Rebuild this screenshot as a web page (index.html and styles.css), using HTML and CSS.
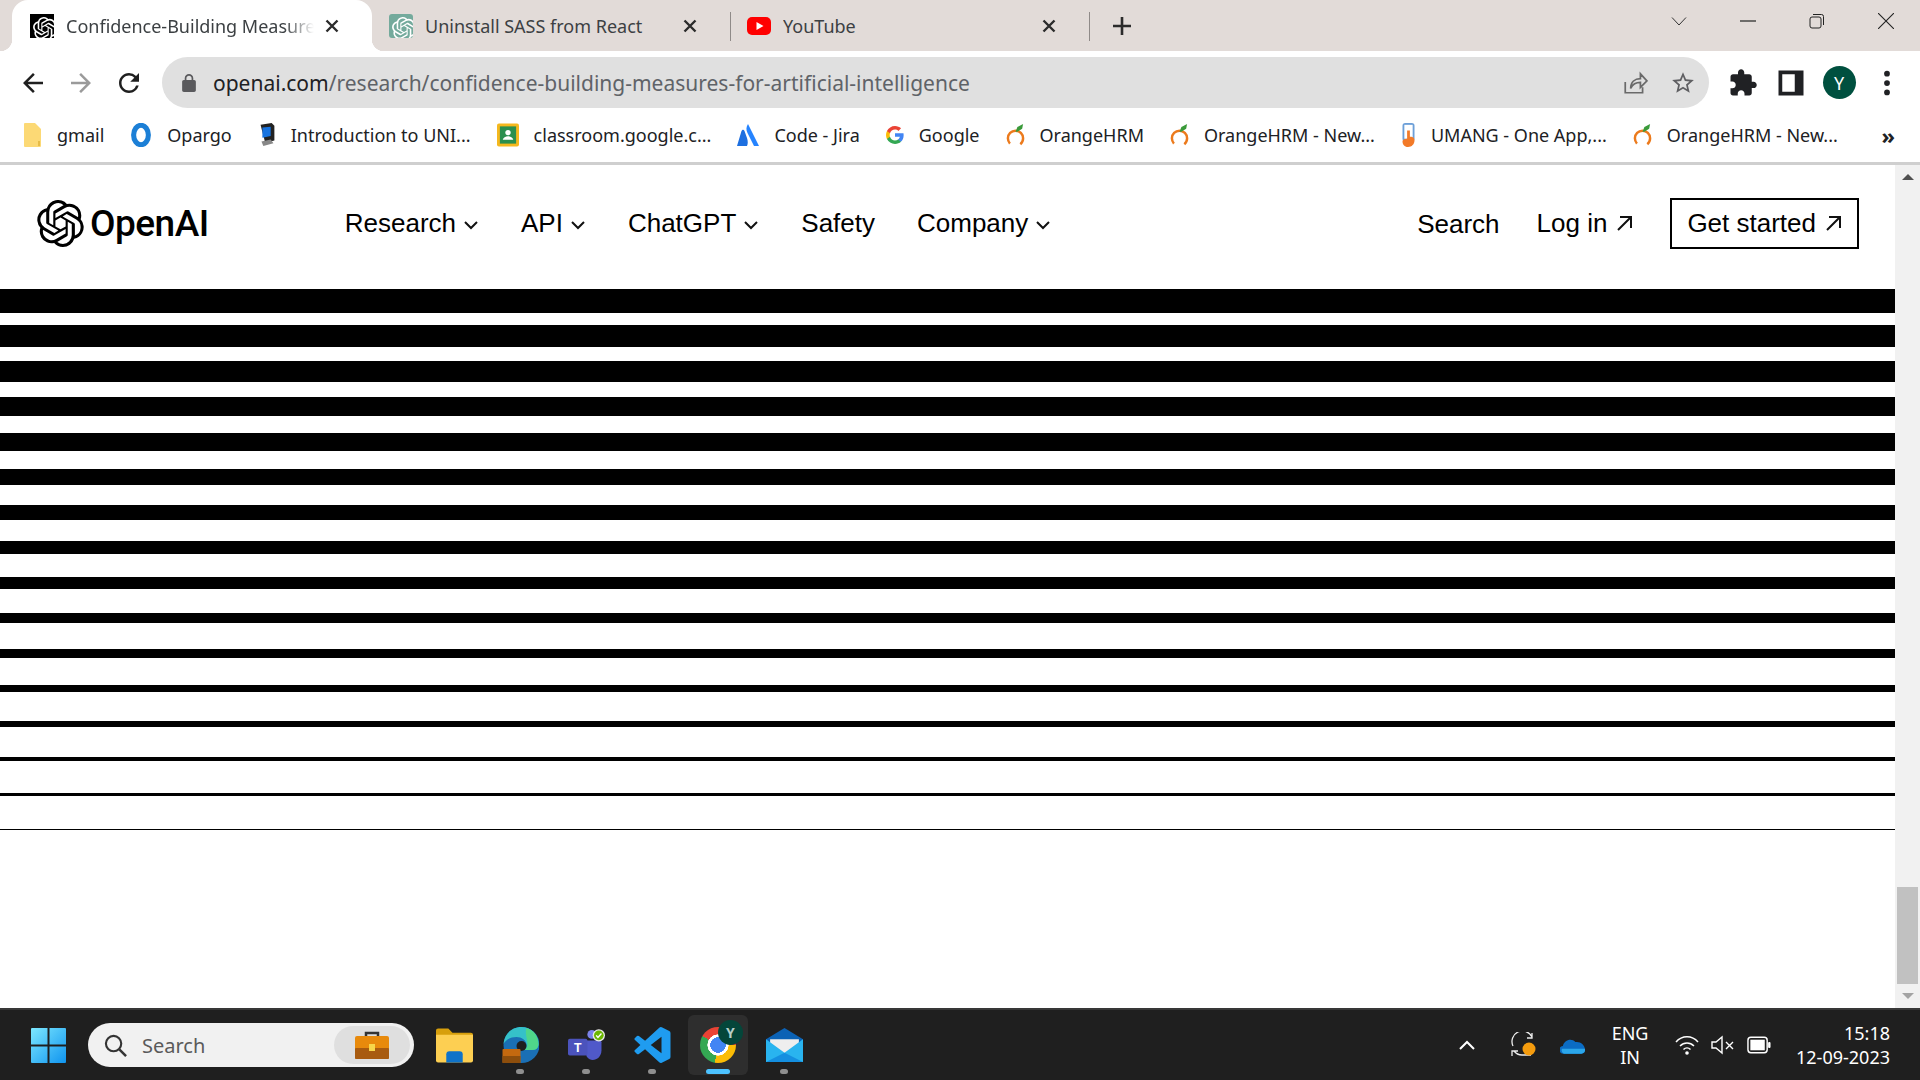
FILE: index.html
```html
<!DOCTYPE html>
<html lang="en">
<head>
    <meta charset="UTF-8">
    <meta name="viewport" content="width=device-width, initial-scale=1.0">
    <title>OpenAI - Chrome</title>
    <link rel="stylesheet" href="styles.css">
</head>
<body>
    <svg class="defs" xmlns="http://www.w3.org/2000/svg">
        <symbol id="openai" viewBox="0 0 24 24"><path d="M22.2819 9.8211a5.9847 5.9847 0 0 0-.5157-4.9108 6.0462 6.0462 0 0 0-6.5098-2.9A6.0651 6.0651 0 0 0 4.9807 4.1818a5.9847 5.9847 0 0 0-3.9977 2.9 6.0462 6.0462 0 0 0 .7427 7.0966 5.98 5.98 0 0 0 .511 4.9107 6.051 6.051 0 0 0 6.5146 2.9001A5.9847 5.9847 0 0 0 13.2599 24a6.0557 6.0557 0 0 0 5.7718-4.2058 5.9894 5.9894 0 0 0 3.9977-2.9001 6.0557 6.0557 0 0 0-.7475-7.0729zm-9.022 12.6081a4.4755 4.4755 0 0 1-2.8764-1.0408l.1419-.0804 4.7783-2.7582a.7948.7948 0 0 0 .3927-.6813v-6.7369l2.02 1.1686a.071.071 0 0 1 .038.052v5.5826a4.504 4.504 0 0 1-4.4945 4.4944zm-9.6607-4.1254a4.4708 4.4708 0 0 1-.5346-3.0137l.142.0852 4.783 2.7582a.7712.7712 0 0 0 .7806 0l5.8428-3.3685v2.3324a.0804.0804 0 0 1-.0332.0615L9.74 19.9502a4.4992 4.4992 0 0 1-6.1408-1.6464zM2.3408 7.8956a4.485 4.485 0 0 1 2.3655-1.9728V11.6a.7664.7664 0 0 0 .3879.6765l5.8144 3.3543-2.0201 1.1685a.0757.0757 0 0 1-.071 0l-4.8303-2.7865A4.504 4.504 0 0 1 2.3408 7.872zm16.5963 3.8558L13.1038 8.364 15.1192 7.2a.0757.0757 0 0 1 .071 0l4.8303 2.7913a4.4944 4.4944 0 0 1-.6765 8.1042v-5.6772a.79.79 0 0 0-.407-.667zm2.0107-3.0231l-.142-.0852-4.7735-2.7818a.7759.7759 0 0 0-.7854 0L9.409 9.2297V6.8974a.0662.0662 0 0 1 .0284-.0615l4.8303-2.7866a4.4992 4.4992 0 0 1 6.6802 4.66zM8.3065 12.863l-2.02-1.1638a.0804.0804 0 0 1-.038-.0567V6.0742a4.4992 4.4992 0 0 1 7.3757-3.4537l-.142.0805L8.704 5.459a.7948.7948 0 0 0-.3927.6813zm1.0976-2.3654l2.602-1.4998 2.6069 1.4998v2.9994l-2.5974 1.4997-2.6067-1.4997Z"/></symbol>
        <symbol id="x" viewBox="0 0 16 16"><path d="M2.5 2.5l11 11M13.5 2.5l-11 11" fill="none" stroke="#2b2b2b" stroke-width="2.4"/></symbol>
        <symbol id="chev" viewBox="0 0 16 16"><path d="M2 5l6 6 6-6" fill="none" stroke="#111" stroke-width="2"/></symbol>
        <symbol id="arrow" viewBox="0 0 18 18"><path d="M3 16L15.5 3.5M5 3h11v11" fill="none" stroke="#111" stroke-width="2"/></symbol>
        <symbol id="orange" viewBox="0 0 20 26"><circle cx="10" cy="16" r="8" fill="none" stroke="#ec7a1c" stroke-width="2.6" stroke-dasharray="38 12" stroke-dashoffset="-19"/><path d="M10 9l2-5 6-3-1 5-5 3z" fill="#3a9a3a"/></symbol>
    </svg>

    <div class="window">
        <div class="tabstrip">
            <div class="tab tab-active">
                <svg class="favicon fav-black" viewBox="-4 -4 32 32"><use href="#openai"/></svg>
                <span class="tab-title tab-fade">Confidence-Building Measures for Artificial Intelligence</span>
                <svg class="tab-close"><use href="#x"/></svg>
            </div>
            <div class="tab">
                <svg class="favicon fav-teal" viewBox="-4 -4 32 32"><use href="#openai"/></svg>
                <span class="tab-title">Uninstall SASS from React</span>
                <svg class="tab-close"><use href="#x"/></svg>
            </div>
            <div class="tab-sep"></div>
            <div class="tab">
                <svg class="favicon" viewBox="0 0 24 24"><rect y="3" width="24" height="18" rx="5" fill="#f00"/><path d="M9.5 8l7 4-7 4z" fill="#fff"/></svg>
                <span class="tab-title">YouTube</span>
                <svg class="tab-close"><use href="#x"/></svg>
            </div>
            <div class="tab-sep"></div>
            <svg class="new-tab" viewBox="0 0 18 18"><path d="M9 0v18M0 9h18" stroke="#2b2b2b" stroke-width="2.6"/></svg>
            <div class="win-controls">
                <div class="win-btn"><svg viewBox="0 0 16 16"><path d="M1 4.5l7 7.5 7-7.5" fill="none" stroke="#333" stroke-width="1"/></svg></div>
                <div class="win-btn"><svg viewBox="0 0 16 16"><path d="M0 8h16" stroke="#222" stroke-width="1.2"/></svg></div>
                <div class="win-btn"><svg viewBox="0 0 16 16"><rect x="1" y="4" width="11" height="11" rx="2" fill="none" stroke="#222"/><path d="M4 1.5h8.5a2 2 0 0 1 2 2V12" fill="none" stroke="#222"/></svg></div>
                <div class="win-btn"><svg viewBox="0 0 16 16"><path d="M0 0l16 16M16 0L0 16" stroke="#222" stroke-width="1.1"/></svg></div>
            </div>
        </div>

        <div class="toolbar">
            <div class="tool-btn"><svg viewBox="0 0 24 24"><path fill="#1f1f1f" d="M20 11H7.83l5.59-5.59L12 4l-8 8 8 8 1.41-1.41L7.83 13H20v-2z"/></svg></div>
            <div class="tool-btn"><svg viewBox="0 0 24 24"><path fill="#9a9a9a" d="M12 4l-1.41 1.41L16.17 11H4v2h12.17l-5.58 5.59L12 20l8-8z"/></svg></div>
            <div class="tool-btn"><svg viewBox="0 0 24 24"><path fill="#1f1f1f" d="M17.65 6.35A7.958 7.958 0 0012 4c-4.42 0-7.99 3.58-7.99 8s3.57 8 7.99 8c3.73 0 6.84-2.55 7.73-6h-2.08A5.99 5.99 0 0112 18c-3.31 0-6-2.69-6-6s2.69-6 6-6c1.66 0 3.14.69 4.22 1.78L13 11h7V4l-2.35 2.35z"/></svg></div>
            <div class="omnibox">
                <svg class="lock" viewBox="4 1 16 21"><path fill="#5a5a5d" d="M18 8h-1V6c0-2.76-2.24-5-5-5S7 3.24 7 6v2H6c-1.1 0-2 .9-2 2v10c0 1.1.9 2 2 2h12c1.1 0 2-.9 2-2V10c0-1.1-.9-2-2-2zM9 6c0-1.66 1.34-3 3-3s3 1.34 3 3v2H9V6z"/></svg>
                <span class="url"><span class="url-host">openai.com</span>/research/confidence-building-measures-for-artificial-intelligence</span>
                <div class="omni-btn"><svg viewBox="0 0 24 24"><path d="M3 11v10h16v-5M8 17c0-6 4-9 9-9V3.500l6 6.500-6 6v-4.500c-4 0-7 1.500-9 5.500z" fill="none" stroke="#6a6a6a" stroke-width="1.6"/></svg></div>
                <div class="omni-btn"><svg viewBox="0 0 24 24"><path fill="#5f5f62" d="M22 9.24l-7.19-.62L12 2 9.19 8.630 2 9.240l5.460 4.730L5.820 21 12 17.270 18.180 21l-1.630-7.030L22 9.240zM12 15.400l-3.760 2.270 1-4.280-3.320-2.880 4.380-.38L12 6.100l1.710 4.040 4.380.38-3.320 2.880 1 4.280L12 15.400z"/></svg></div>
            </div>
            <div class="tool-actions">
                <div class="tool-btn"><svg viewBox="0 0 24 24"><path fill="#202124" d="M20.500 11H19V7c0-1.100-.9-2-2-2h-4V3.500C13 2.120 11.880 1 10.500 1S8 2.120 8 3.500V5H4c-1.100 0-1.990.9-1.990 2v3.800H3.500c1.490 0 2.700 1.210 2.700 2.700s-1.210 2.700-2.700 2.700H2V20c0 1.100.9 2 2 2h3.800v-1.500c0-1.490 1.210-2.700 2.700-2.700 1.490 0 2.700 1.210 2.700 2.700V22H17c1.100 0 2-.9 2-2v-4h1.500c1.380 0 2.500-1.120 2.500-2.500S21.880 11 20.500 11z"/></svg></div>
                <div class="tool-btn"><svg viewBox="0 0 24 24"><path fill="#202124" fill-rule="evenodd" d="M2 2h20v20H2zM5 5v14h10V5z"/></svg></div>
                <div class="tool-btn"><span class="avatar">Y</span></div>
                <div class="tool-btn"><svg viewBox="0 0 24 24"><circle cx="12" cy="4.500" r="2.300" fill="#202124"/><circle cx="12" cy="12" r="2.300" fill="#202124"/><circle cx="12" cy="19.500" r="2.300" fill="#202124"/></svg></div>
            </div>
        </div>

        <div class="bookmarks">
            <div class="bm"><svg class="bm-icon" viewBox="0 0 18 24"><path d="M1 0h10l6 6v17a1 1 0 0 1-1 1H1a1 1 0 0 1-1-1V1a1 1 0 0 1 1-1z" fill="#fcd975"/><path d="M15 18v5" stroke="#e0b23a" stroke-width="1.500"/></svg><span>gmail</span></div>
            <div class="bm"><svg class="bm-icon bm-wide" viewBox="0 0 22 26"><ellipse cx="11" cy="13" rx="8" ry="10.500" fill="none" stroke="#1c7fd6" stroke-width="5.500"/></svg><span>Opargo</span></div>
            <div class="bm"><svg class="bm-icon" viewBox="0 0 18 26"><path d="M2 2l12-2 3 3v16l-10 2z" fill="#222"/><path d="M4 5l9-1v10l-9 2z" fill="#1673e0"/><path d="M3 20l10-2 3 4-11 3z" fill="#888"/></svg><span>Introduction to UNI...</span></div>
            <div class="bm"><svg class="bm-icon bm-wide" viewBox="0 0 23 24"><rect width="23" height="24" rx="2" fill="#f5b81e"/><rect x="3" y="3" width="17" height="18" fill="#2a8f4e"/><circle cx="11.500" cy="9.500" r="2.800" fill="#fff"/><path d="M6 17c1-5 10-5 11 0z" fill="#fff"/></svg><span>classroom.google.c...</span></div>
            <div class="bm"><svg class="bm-icon bm-wide" viewBox="0 0 22 24"><path d="M11 1c-2 3-2 6-.5 9l6.500 13h5z" fill="#2684ff"/><path d="M7.500 8c-1.500-2-2-1-3 0L0 23h10c1-2 1-5 0-8z" fill="#1d6fe0"/></svg><span>Code - Jira</span></div>
            <div class="bm"><svg class="bm-icon" viewBox="1 1 22 22"><path fill="#4285F4" d="M22.560 12.250c0-.78-.07-1.530-.2-2.250H12v4.260h5.920c-.26 1.370-1.040 2.530-2.210 3.310v2.770h3.570c2.080-1.920 3.280-4.740 3.280-8.090z"/><path fill="#34A853" d="M12 23c2.970 0 5.460-.98 7.280-2.660l-3.570-2.770c-.98.66-2.230 1.060-3.710 1.060-2.860 0-5.290-1.930-6.160-4.530H2.180v2.840C3.990 20.530 7.700 23 12 23z"/><path fill="#FBBC05" d="M5.840 14.090c-.22-.66-.35-1.360-.35-2.090s.13-1.430.35-2.090V7.070H2.180C1.430 8.550 1 10.220 1 12s.43 3.450 1.180 4.930l2.850-2.220.81-.62z"/><path fill="#EA4335" d="M12 5.380c1.620 0 3.060.56 4.210 1.640l3.150-3.150C17.450 2.090 14.970 1 12 1 7.700 1 3.990 3.470 2.180 7.070l3.660 2.840c.87-2.600 3.300-4.530 6.160-4.530z"/></svg><span>Google</span></div>
            <div class="bm"><svg class="bm-icon bm-orange"><use href="#orange"/></svg><span>OrangeHRM</span></div>
            <div class="bm"><svg class="bm-icon bm-orange"><use href="#orange"/></svg><span>OrangeHRM - New...</span></div>
            <div class="bm"><svg class="bm-icon bm-thin" viewBox="0 0 15 26"><rect x="1" y="0" width="13" height="20" rx="3" fill="#6c9fd8"/><rect x="3" y="2" width="9" height="15" fill="#fff"/><path d="M6 8h3v7c2 0 5 0 5 4 0 4-3 7-7 7s-6-3-6-6c0-2 2-3 5-3z" fill="#f27a28"/></svg><span>UMANG - One App,...</span></div>
            <div class="bm"><svg class="bm-icon bm-orange"><use href="#orange"/></svg><span>OrangeHRM - New...</span></div>
            <div class="bm-more">&raquo;</div>
        </div>

        <div class="viewport">
            <main class="page">
                <header class="site-head">
                    <div class="brand">
                        <svg class="brand-logo"><use href="#openai"/></svg>
                        <span class="brand-name">OpenAI</span>
                    </div>
                    <nav class="site-nav">
                        <a class="nav-item nav-drop">Research<svg class="nav-chev"><use href="#chev"/></svg></a>
                        <a class="nav-item nav-drop">API<svg class="nav-chev"><use href="#chev"/></svg></a>
                        <a class="nav-item nav-drop">ChatGPT<svg class="nav-chev"><use href="#chev"/></svg></a>
                        <a class="nav-item nav-drop">Safety</a>
                        <a class="nav-item">Company<svg class="nav-chev"><use href="#chev"/></svg></a>
                    </nav>
                    <div class="site-actions">
                        <a class="nav-item nav-search">Search</a>
                        <a class="nav-item">Log in<svg class="nav-arrow"><use href="#arrow"/></svg></a>
                        <a class="nav-item btn-start">Get started<svg class="nav-arrow"><use href="#arrow"/></svg></a>
                    </div>
                </header>
                <div class="stripes">
                    <div class="stripe"></div><div class="stripe"></div><div class="stripe"></div><div class="stripe"></div>
                    <div class="stripe"></div><div class="stripe"></div><div class="stripe"></div><div class="stripe"></div>
                    <div class="stripe"></div><div class="stripe"></div><div class="stripe"></div><div class="stripe"></div>
                    <div class="stripe"></div><div class="stripe"></div><div class="stripe"></div><div class="stripe"></div>
                </div>
            </main>
            <div class="scrollbar">
                <div class="scroll-up"></div>
                <div class="scroll-thumb"></div>
                <div class="scroll-down"></div>
            </div>
        </div>

        <footer class="taskbar">
            <svg class="start" viewBox="0 0 35 35">
                <defs><linearGradient id="win" x1="0" y1="0" x2="1" y2="1"><stop offset="0" stop-color="#7de8ff"/><stop offset="1" stop-color="#0f94ef"/></linearGradient></defs>
                <path fill="url(#win)" d="M0 1a1 1 0 0 1 1-1h15.500v16.500H0zM18.500 0H34a1 1 0 0 1 1 1v15.500H18.500zM0 18.500h16.500V35H1a1 1 0 0 1-1-1zM18.500 18.500H35V34a1 1 0 0 1-1 1H18.500z"/>
            </svg>
            <div class="task-search">
                <svg class="search-icon" viewBox="0 0 24 24"><circle cx="10" cy="10" r="8" fill="none" stroke="#333" stroke-width="2.200"/><path d="M16 16l7 7" stroke="#333" stroke-width="2.600"/></svg>
                <span class="search-label">Search</span>
                <div class="search-badge">
                    <svg class="case-icon" viewBox="0 0 34 28"><path d="M11 6V2h12v4" fill="none" stroke="#333" stroke-width="2.500"/><rect y="5" width="34" height="23" rx="2" fill="#e88a0c"/><rect y="17" width="34" height="11" rx="1" fill="#a85b10"/><rect x="14" y="13" width="6" height="7" fill="#f7d64a"/></svg>
                </div>
            </div>
            <div class="task-apps">
                <div class="app">
                    <svg viewBox="0 0 36 34"><path d="M0 3a2 2 0 0 1 2-2h10l4 4h18a2 2 0 0 1 2 2v4H0z" fill="#d79f0c"/><path d="M0 7h36v25a2 2 0 0 1-2 2H2a2 2 0 0 1-2-2z" fill="#fdcf52"/><path d="M10 34v-8a3 3 0 0 1 3-3h10a3 3 0 0 1 3 3v8z" fill="#0f73c9"/></svg>
                </div>
                <div class="app app-open">
                    <svg viewBox="0 0 36 36"><circle cx="19" cy="18" r="18" fill="#1a6fb5"/><path d="M1 17C2 7 9 0 19 0c9 0 17 7 17 17 0 3-2 6-6 6H20c3-1 4-3 4-5 0-5-5-8-10-8-6 0-11 3-13 7z" fill="#35c1c9"/><path d="M24 1c7 2 12 8 12 16 0 3-2 6-6 6h-8c2-2 3-3 3-5 0-6-3-12-1-17z" fill="#4fd68a"/><circle cx="19" cy="19" r="5" fill="#1f1f1f"/><rect y="22" width="18" height="14" rx="1" fill="#c4690f"/><rect y="29" width="18" height="7" fill="#8d4e0c"/></svg>
                </div>
                <div class="app app-open">
                    <svg viewBox="0 0 42 36"><circle cx="27" cy="6" r="5" fill="#7b83eb"/><path d="M20 13h16a2 2 0 0 1 2 2v9c0 7-5 11-10 11s-8-4-8-9z" fill="#5059c9"/><rect y="11" width="22" height="19" rx="2" fill="#4b53bc"/><text class="teams-t" x="11" y="26" text-anchor="middle">T</text><circle cx="35" cy="7" r="7" fill="#e8e8e8"/><circle cx="35" cy="7" r="5.500" fill="#6bb700"/><path d="M32 7l2 2.500 4-4.500" fill="none" stroke="#fff" stroke-width="1.500"/></svg>
                </div>
                <div class="app app-open">
                    <svg viewBox="0 0 24 24"><path fill="#1f9cf0" d="M23.150 2.587L18.210.21a1.494 1.494 0 0 0-1.705.29l-9.460 8.630-4.120-3.128a.999.999 0 0 0-1.276.057L.327 7.261A1 1 0 0 0 .326 8.740L3.899 12 .326 15.260a1 1 0 0 0 .001 1.479L1.650 17.940a.999.999 0 0 0 1.276.057l4.120-3.128 9.460 8.630a1.492 1.492 0 0 0 1.704.29l4.942-2.377A1.500 1.500 0 0 0 24 20.060V3.939a1.500 1.500 0 0 0-.85-1.352zm-5.146 14.861L10.826 12l7.178-5.448v10.896z"/></svg>
                </div>
                <div class="app app-chrome">
                    <div class="chrome-icon"></div>
                    <span class="chrome-badge">Y</span>
                </div>
                <div class="app app-open">
                    <svg viewBox="0 0 36 33"><path d="M0 11L18 0l18 11v10H0z" fill="#0b62b5"/><path d="M4 11h28v9L18 26 4 20z" fill="#eee"/><path d="M0 11l18 13 18-13v22H0z" fill="#29b4ef"/><path d="M36 33H0l18-9 18 9z" fill="#148fe0"/></svg>
                </div>
            </div>
            <div class="tray">
                <svg class="tray-caret" viewBox="0 0 16 10"><path d="M1 9l7-7 7 7" fill="none" stroke="#fff" stroke-width="2"/></svg>
                <svg class="tray-sync" viewBox="0 0 26 26"><path d="M2 14A10 10 0 0 1 21 5M21 1v5h-5M20 23H11A10 10 0 0 1 3 19M1 24v-5h6" fill="none" stroke="#eee" stroke-width="1.300"/><circle cx="18" cy="17" r="6.500" fill="#f59c0e"/></svg>
                <svg class="tray-cloud" viewBox="0 0 26 18"><path d="M4 18a4 4 0 0 1-1-8c1-6 9-9 13-4 5-1 10 3 10 8a4 4 0 0 1-4 4z" fill="#0b6cc4"/><path d="M4 18a4 4 0 0 1-2-5h24a4 4 0 0 1-4 5z" fill="#2ba6ea"/></svg>
                <div class="tray-lang"><span>ENG</span><span>IN</span></div>
                <svg class="tray-icon" viewBox="0 0 24 20"><path d="M1 7c6-7 16-7 22 0M5 11c4-4 10-4 14 0M8.500 14.500c2-2 5-2 7 0" fill="none" stroke="#fff" stroke-width="1.500"/><circle cx="12" cy="18" r="1.800" fill="#fff"/></svg>
                <svg class="tray-icon" viewBox="0 0 24 20"><path d="M1 7h4l6-5v16l-6-5H1zM15 7l7 7M22 7l-7 7" fill="none" stroke="#fff" stroke-width="1.400"/></svg>
                <svg class="tray-icon" viewBox="0 0 25 20"><rect x="1" y="2" width="20" height="16" rx="3" fill="none" stroke="#fff" stroke-width="1.500"/><rect x="3.500" y="4.500" width="15" height="11" fill="#fff"/><rect x="22" y="7" width="2.500" height="6" rx="1" fill="#fff"/></svg>
                <div class="tray-clock"><span>15:18</span><span>12-09-2023</span></div>
            </div>
        </footer>
    </div>
</body>
</html>
```

FILE: styles.css
```css
/* Global Styles */
html, body {
    margin: 0;
    padding: 0;
    overflow: hidden;
}

body {
    font-family: 'Noto Sans', 'Open Sans', sans-serif;
    background: #ffffff;
    color: #202124;
}

svg {
    display: block;
    flex: none;
}

.defs {
    display: none;
}

.window {
    display: flex;
    flex-direction: column;
    width: 1920px;
    height: 1080px;
    overflow: hidden;
}

/* Tab strip */
.tabstrip {
    display: flex;
    align-items: center;
    height: 51px;
    padding-left: 12px;
    background: #e2dbd8;
    flex: none;
}

.tab {
    display: flex;
    align-items: center;
    box-sizing: border-box;
    width: 358px;
    height: 51px;
    padding: 0 16px 0 16px;
    font-size: 18px;
    color: #3c4043;
}

.tab:nth-child(2) {
    padding-left: 17px;
}

.tab-active {
    position: relative;
    width: 360px;
    padding-left: 18px;
    background: #ffffff;
    border-radius: 16px 16px 0 0;
    color: #3c4043;
}

.tab-active::before,
.tab-active::after {
    content: "";
    position: absolute;
    bottom: 0;
    width: 12px;
    height: 12px;
}

.tab-active::before {
    left: -12px;
    background: radial-gradient(circle at 0 0, transparent 12px, #ffffff 12.5px);
}

.tab-active::after {
    right: -12px;
    background: radial-gradient(circle at 100% 0, transparent 12px, #ffffff 12.5px);
}

.favicon {
    width: 24px;
    height: 24px;
    margin-right: 12px;
}

.fav-black {
    background: #000000;
    fill: #ffffff;
}

.fav-teal {
    background: #74aa9c;
    border-radius: 3px;
    fill: #ffffff;
}

.tab-title {
    flex: 1;
    overflow: hidden;
    white-space: nowrap;
}

.tab-fade {
    -webkit-mask-image: linear-gradient(90deg, #000 88%, transparent 100%);
    mask-image: linear-gradient(90deg, #000 88%, transparent 100%);
}

.tab-close {
    width: 16px;
    height: 16px;
    margin: 0 16px 0 10px;
}

.tab-sep {
    width: 1px;
    height: 29px;
    margin-top: 2px;
    background: #8f8a88;
    flex: none;
}

.new-tab {
    width: 18px;
    height: 18px;
    margin-left: 23px;
}

.win-controls {
    display: flex;
    margin-left: auto;
    height: 42px;
    margin-bottom: 9px;
}

.win-btn {
    display: flex;
    align-items: center;
    justify-content: center;
    width: 69px;
}

.win-btn svg {
    width: 16px;
    height: 16px;
}

/* Toolbar */
.toolbar {
    display: flex;
    align-items: center;
    box-sizing: border-box;
    height: 57px;
    padding: 6px 9px 0;
    background: #ffffff;
    flex: none;
}

.tool-btn {
    display: flex;
    align-items: center;
    justify-content: center;
    width: 48px;
    height: 51px;
}

.tool-btn svg {
    width: 30px;
    height: 30px;
}

.omnibox {
    display: flex;
    align-items: center;
    flex: 1;
    height: 51px;
    margin-left: 9px;
    padding: 0 2px 0 20px;
    background: #e0e0e0;
    border-radius: 26px;
}

.lock {
    width: 14px;
    height: 18px;
    margin-right: 17px;
}

.url {
    flex: 1;
    font-size: 21px;
    color: #5f6368;
    white-space: nowrap;
}

.url-host {
    color: #202124;
}

.omni-btn {
    display: flex;
    align-items: center;
    justify-content: center;
    width: 48px;
}

.omni-btn svg {
    width: 26px;
    height: 26px;
}

.tool-actions {
    display: flex;
    margin-left: 10px;
}

.avatar {
    display: flex;
    align-items: center;
    justify-content: center;
    width: 33px;
    height: 33px;
    border-radius: 50%;
    background: #00503f;
    color: #ffffff;
    font-size: 18px;
}

/* Bookmarks */
.bookmarks {
    display: flex;
    align-items: center;
    gap: 26px;
    box-sizing: content-box;
    height: 54px;
    padding-left: 24px;
    background: #ffffff;
    border-bottom: 3px solid #cfcfcf;
    font-size: 18px;
    color: #202124;
    flex: none;
}

.bm {
    display: flex;
    align-items: center;
    gap: 15px;
    white-space: nowrap;
}

.bm-icon {
    width: 18px;
    height: 24px;
}

.bm-wide {
    width: 22px;
}

.bm-thin {
    width: 15px;
}

.bm-orange {
    width: 19px;
    height: 25px;
}

.bm-more {
    margin-left: auto;
    margin-right: 25px;
    font-size: 22px;
    font-weight: 700;
}

/* Page */
.viewport {
    display: flex;
    flex: 1;
    min-height: 0;
}

.page {
    flex: 1;
    background: #ffffff;
    overflow: hidden;
}

.site-head {
    display: flex;
    align-items: center;
    box-sizing: border-box;
    height: 124px;
    padding: 0 36px 8px 37px;
    font-family: 'Liberation Sans', Arial, sans-serif;
    color: #000000;
}

.brand {
    display: flex;
    align-items: center;
    gap: 6px;
}

.brand-logo {
    width: 47px;
    height: 47px;
    fill: #000000;
}

.brand-name {
    font-family: 'Roboto', sans-serif;
    font-size: 37px;
    font-weight: 500;
    letter-spacing: -0.5px;
}

.site-nav {
    display: flex;
    gap: 36px;
    margin-left: 136px;
}

.nav-item {
    display: flex;
    align-items: center;
    font-size: 26px;
    white-space: nowrap;
}

.nav-drop {
    padding-right: 6px;
}

.nav-chev {
    width: 16px;
    height: 16px;
    margin: 3px 0 0 7px;
}

.nav-arrow {
    width: 18px;
    height: 18px;
    margin-left: 8px;
}

.site-actions {
    display: flex;
    align-items: center;
    gap: 37px;
    margin-left: auto;
}

.nav-search {
    margin-top: 3px;
}

.btn-start {
    padding: 8px 15px;
    border: 2px solid #000000;
}

.stripes {
    display: flex;
    flex-direction: column;
}

.stripe {
    box-sizing: border-box;
    height: 36px;
    border-top: 0 solid #000000;
}

.stripe:nth-child(1) { border-top-width: 24px; }
.stripe:nth-child(2) { border-top-width: 22px; }
.stripe:nth-child(3) { border-top-width: 21px; }
.stripe:nth-child(4) { border-top-width: 19px; }
.stripe:nth-child(5) { border-top-width: 18px; }
.stripe:nth-child(6) { border-top-width: 16px; }
.stripe:nth-child(7) { border-top-width: 15px; }
.stripe:nth-child(8) { border-top-width: 13px; }
.stripe:nth-child(9) { border-top-width: 12px; }
.stripe:nth-child(10) { border-top-width: 10px; }
.stripe:nth-child(11) { border-top-width: 9px; }
.stripe:nth-child(12) { border-top-width: 7px; }
.stripe:nth-child(13) { border-top-width: 6px; }
.stripe:nth-child(14) { border-top-width: 4px; }
.stripe:nth-child(15) { border-top-width: 3px; }
.stripe:nth-child(16) { border-top-width: 1px; }

.scrollbar {
    display: flex;
    flex-direction: column;
    align-items: center;
    width: 25px;
    background: #f1f1f1;
    flex: none;
}

.scroll-up {
    width: 0;
    height: 0;
    margin-top: 9px;
    border: 6px solid transparent;
    border-top: 0;
    border-bottom: 6px solid #505050;
}

.scroll-thumb {
    width: 21px;
    height: 97px;
    margin-top: auto;
    background: #c1c1c1;
}

.scroll-down {
    width: 0;
    height: 0;
    margin: 9px 0 9px;
    border: 6px solid transparent;
    border-bottom: 0;
    border-top: 6px solid #a3a3a3;
}

/* Taskbar */
.taskbar {
    display: flex;
    align-items: center;
    box-sizing: border-box;
    height: 72px;
    padding-left: 31px;
    background: #1f1f1f;
    border-top: 2px solid #383838;
    flex: none;
}

.start {
    width: 35px;
    height: 35px;
}

.task-search {
    display: flex;
    align-items: center;
    box-sizing: border-box;
    width: 326px;
    height: 44px;
    margin-left: 22px;
    padding: 0 4px 0 16px;
    background: #f1f1f1;
    border-radius: 22px;
}

.search-icon {
    width: 23px;
    height: 23px;
}

.search-label {
    margin-left: 15px;
    font-size: 20px;
    color: #5a5a5a;
}

.search-badge {
    display: flex;
    align-items: center;
    justify-content: center;
    width: 76px;
    height: 38px;
    margin-left: auto;
    background: #dfdfdf;
    border-radius: 19px;
}

.case-icon {
    width: 34px;
    height: 28px;
}

.task-apps {
    display: flex;
    align-items: center;
    margin-left: 7px;
}

.app {
    position: relative;
    display: flex;
    align-items: center;
    justify-content: center;
    width: 66px;
    height: 60px;
}

.app svg {
    width: 37px;
    height: 36px;
}

.app-open::after {
    content: "";
    position: absolute;
    left: 50%;
    bottom: 1px;
    width: 8px;
    height: 5px;
    margin-left: -4px;
    border-radius: 3px;
    background: #8f8f8f;
}

.teams-t {
    font-family: 'Liberation Sans', sans-serif;
    font-size: 14px;
    font-weight: 700;
    fill: #ffffff;
}

.app-chrome {
    width: 60px;
    margin: 0 3px;
    background: #2e2e2e;
    border-radius: 6px;
}

.app-chrome::after {
    content: "";
    position: absolute;
    left: 18px;
    bottom: 1px;
    width: 24px;
    height: 5px;
    border-radius: 3px;
    background: #4cc2ff;
}

.chrome-icon {
    width: 36px;
    height: 36px;
    border-radius: 50%;
    background:
        radial-gradient(circle, #4285f4 0 30%, #ffffff 31% 41%, transparent 42%),
        conic-gradient(from -60deg, #ea4335 0 150deg, #fbbc05 150deg 250deg, #34a853 250deg);
}

.chrome-badge {
    position: absolute;
    top: 5px;
    right: 5px;
    display: flex;
    align-items: center;
    justify-content: center;
    width: 25px;
    height: 25px;
    border-radius: 50%;
    background: #04463a;
    color: #b7d0ca;
    font-size: 14px;
    font-weight: 700;
}

.tray {
    display: flex;
    align-items: center;
    margin-left: auto;
    padding-right: 30px;
    color: #ffffff;
    font-size: 18px;
}

.tray-caret {
    width: 16px;
    height: 10px;
}

.tray-sync {
    width: 26px;
    height: 26px;
    margin-left: 36px;
}

.tray-cloud {
    width: 25px;
    height: 18px;
    margin-left: 23px;
}

.tray-lang {
    display: flex;
    flex-direction: column;
    align-items: center;
    gap: 2px;
    width: 40px;
    margin: 0 25px 0 25px;
    line-height: 22px;
}

.tray-icon {
    width: 24px;
    height: 20px;
    margin-right: 12px;
}

.tray-clock {
    display: flex;
    flex-direction: column;
    align-items: flex-end;
    gap: 2px;
    margin-left: 13px;
    line-height: 22px;
}
```
